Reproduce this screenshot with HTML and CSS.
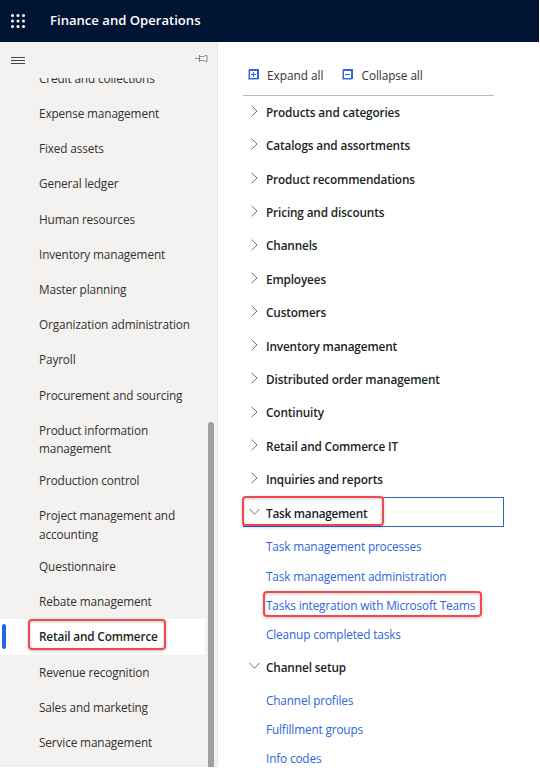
FILE: index.html
```
<!DOCTYPE html>
<html lang="en">
<head>
<meta charset="utf-8">
<title>Finance and Operations</title>
<link rel="stylesheet" href="styles.css">
</head>
<body>
<div class="app">
<header class="topbar">
<svg class="waffle" width="14" height="14" viewBox="0 0 14 14" fill="#fff"><circle cx="1.5" cy="1.5" r="1.5"/><circle cx="7" cy="1.5" r="1.5"/><circle cx="12.5" cy="1.5" r="1.5"/><circle cx="1.5" cy="7" r="1.5"/><circle cx="7" cy="7" r="1.5"/><circle cx="12.5" cy="7" r="1.5"/><circle cx="1.5" cy="12.5" r="1.5"/><circle cx="7" cy="12.5" r="1.5"/><circle cx="12.5" cy="12.5" r="1.5"/></svg>
<h1>Finance and Operations</h1>
</header>
<div class="body">
<nav class="side">
<div class="side-top">
<svg width="14" height="8" viewBox="0 0 14 8" stroke="#444" stroke-width="1"><path d="M0 .5h14M0 3.5h14M0 6.5h14"/></svg>
<svg class="pin" width="13" height="9" viewBox="0 0 13 9" fill="none" stroke="#8a8886" stroke-width="1"><path d="M0 4.5h4.5M4.5 1v7M4.5 2.5h3q2 0 3-1h1.5v6h-1.5q-1-1-3-1h-3"/></svg>
</div>
<ul class="modules">
<li>Credit and collections</li>
<li>Expense management</li>
<li>Fixed assets</li>
<li>General ledger</li>
<li>Human resources</li>
<li>Inventory management</li>
<li>Master planning</li>
<li>Organization administration</li>
<li>Payroll</li>
<li>Procurement and sourcing</li>
<li class="two">Product information<br>management</li>
<li>Production control</li>
<li class="two">Project management and<br>accounting</li>
<li>Questionnaire</li>
<li>Rebate management</li>
<li class="current"><span>Retail and Commerce</span><i class="mark mark-module"></i></li>
<li>Revenue recognition</li>
<li>Sales and marketing</li>
<li>Service management</li>
</ul>
<div class="scrollbar"></div>
</nav>
<main class="content">
<div class="tools">
<svg width="11" height="11" viewBox="0 0 11 11"><path fill="#9db7f5" d="M0 1h10v10H0z"/><path fill="#2f63e6" d="M1 0h10v10H1z"/><path fill="#fff" d="M2 2h7v7H2z"/><path stroke="#2f63e6" d="M3 5.5h5M5.5 3v5"/></svg>
<span class="expand">Expand all</span>
<svg width="11" height="11" viewBox="0 0 11 11"><path fill="#9db7f5" d="M0 1h10v10H0z"/><path fill="#2f63e6" d="M1 0h10v10H1z"/><path fill="#fff" d="M2 2h7v7H2z"/><path stroke="#2f63e6" d="M3 5.5h5"/></svg>
<span class="collapse">Collapse all</span>
</div>
<div class="group"><svg class="chev" viewBox="0 0 11 12"><path d="M2.5.7 8 6 2.5 11.3"/></svg>Products and categories</div>
<div class="group"><svg class="chev" viewBox="0 0 11 12"><path d="M2.5.7 8 6 2.5 11.3"/></svg>Catalogs and assortments</div>
<div class="group"><svg class="chev" viewBox="0 0 11 12"><path d="M2.5.7 8 6 2.5 11.3"/></svg>Product recommendations</div>
<div class="group"><svg class="chev" viewBox="0 0 11 12"><path d="M2.5.7 8 6 2.5 11.3"/></svg>Pricing and discounts</div>
<div class="group"><svg class="chev" viewBox="0 0 11 12"><path d="M2.5.7 8 6 2.5 11.3"/></svg>Channels</div>
<div class="group"><svg class="chev" viewBox="0 0 11 12"><path d="M2.5.7 8 6 2.5 11.3"/></svg>Employees</div>
<div class="group"><svg class="chev" viewBox="0 0 11 12"><path d="M2.5.7 8 6 2.5 11.3"/></svg>Customers</div>
<div class="group"><svg class="chev" viewBox="0 0 11 12"><path d="M2.5.7 8 6 2.5 11.3"/></svg>Inventory management</div>
<div class="group"><svg class="chev" viewBox="0 0 11 12"><path d="M2.5.7 8 6 2.5 11.3"/></svg>Distributed order management</div>
<div class="group"><svg class="chev" viewBox="0 0 11 12"><path d="M2.5.7 8 6 2.5 11.3"/></svg>Continuity</div>
<div class="group"><svg class="chev" viewBox="0 0 11 12"><path d="M2.5.7 8 6 2.5 11.3"/></svg>Retail and Commerce IT</div>
<div class="group"><svg class="chev" viewBox="0 0 11 12"><path d="M2.5.7 8 6 2.5 11.3"/></svg>Inquiries and reports</div>
<div class="group focused"><svg class="chev" viewBox="0 0 11 12"><path d="M.5 3 5.5 8.2 10.5 3"/></svg>Task management<i class="mark mark-group"></i></div>
<a class="link">Task management processes</a>
<a class="link">Task management administration</a>
<a class="link">Tasks integration with Microsoft Teams<i class="mark mark-link"></i></a>
<a class="link">Cleanup completed tasks</a>
<div class="group setup"><svg class="chev" viewBox="0 0 11 12"><path d="M.5 3 5.5 8.2 10.5 3"/></svg>Channel setup</div>
<a class="link">Channel profiles</a>
<a class="link">Fulfillment groups</a>
<a class="link">Info codes</a>
</main>
</div>
</div>
</body>
</html>
```
FILE: styles.css
```
* { box-sizing: border-box; }
body { margin: 0; background: #fff; color: #323130; font: 11.8px/18.4px "Open Sans", "Noto Sans", sans-serif; }
.app { width: 539px; height: 767px; overflow: hidden; display: flex; flex-direction: column; }
.topbar { flex: none; height: 42px; background: #001433; display: flex; align-items: center; padding-left: 11px; }
.topbar h1 { margin: -1px 0 0 25px; color: #fff; font-size: 13.1px; font-weight: 600; }
.body { flex: 1; min-height: 0; display: flex; }
.side { position: relative; flex: none; width: 218px; background: #f3f2f1; border-right: 1px solid #e6e5e4; display: flex; flex-direction: column; }
.side-top { flex: none; height: 36px; display: flex; align-items: flex-start; justify-content: space-between; padding: 15px 9px 0 11px; }
.pin { margin-top: -3px; }
.modules { flex: 1; min-height: 0; overflow: hidden; margin: 0; padding: 0; list-style: none; display: flex; flex-direction: column; width: 205px; }
.modules li { flex: none; height: 35.2px; padding: 8px 0 0 39px; white-space: nowrap; letter-spacing: -.13px; }
.modules li:first-child { margin-top: -17.2px; }
.modules .two { height: 50.6px; }
.modules .current { position: relative; background: #fff; color: #201f1e; font-weight: 600; letter-spacing: -.17px; }
.current::before { content: ""; position: absolute; left: 2px; top: 5px; width: 4px; height: 25px; border-radius: 2px; background: #2266e3; }
.scrollbar { position: absolute; right: 3px; top: 380px; bottom: 0; width: 6px; border-radius: 3px 3px 0 0; background: #a19f9d; }
.content { flex: 1; padding: 19px 0 0 25px; }
.tools { width: 251px; height: 35px; border-bottom: 1px solid #bcbcbc; display: flex; align-items: center; padding: 0 0 7px 5px; }
.tools span { margin-left: 8px; padding-top: 1px; letter-spacing: 0; }
.tools .expand { margin-right: 18px; }
.tools .collapse { margin-left: 9px; letter-spacing: -.08px; }
.group { height: 33.4px; display: flex; align-items: center; gap: 6px; padding: 0 0 1.4px 6px; color: #201f1e; font-weight: 600; letter-spacing: -.15px; }
.chev { flex: none; width: 11px; height: 12px; margin-top: -2px; fill: none; stroke: #707070; stroke-width: 1; }
.focused { position: relative; width: 261px; height: 30px; margin: 0 0 5.4px; border: 1px solid #2f63c9; padding: 3px 0 0 5px; letter-spacing: -.25px; }
.link { position: relative; display: flex; align-items: center; width: max-content; height: 29.2px; margin-left: 23px; color: #2b66dd; letter-spacing: -.15px; }
.setup { height: 35.4px; margin-top: 1px; }
.mark { position: absolute; border: 2px solid #f04a4e; border-radius: 4px; box-shadow: 0 1px 3px rgba(0,0,0,.25), inset 0 1px 3px rgba(0,0,0,.2); }
.mark-module { left: 28px; top: 0; width: 138px; height: 31px; }
.mark-group { left: -2px; top: -2px; width: 142px; height: 30px; }
.mark-link { left: -3px; top: 1px; width: 219px; height: 26px; }
```
